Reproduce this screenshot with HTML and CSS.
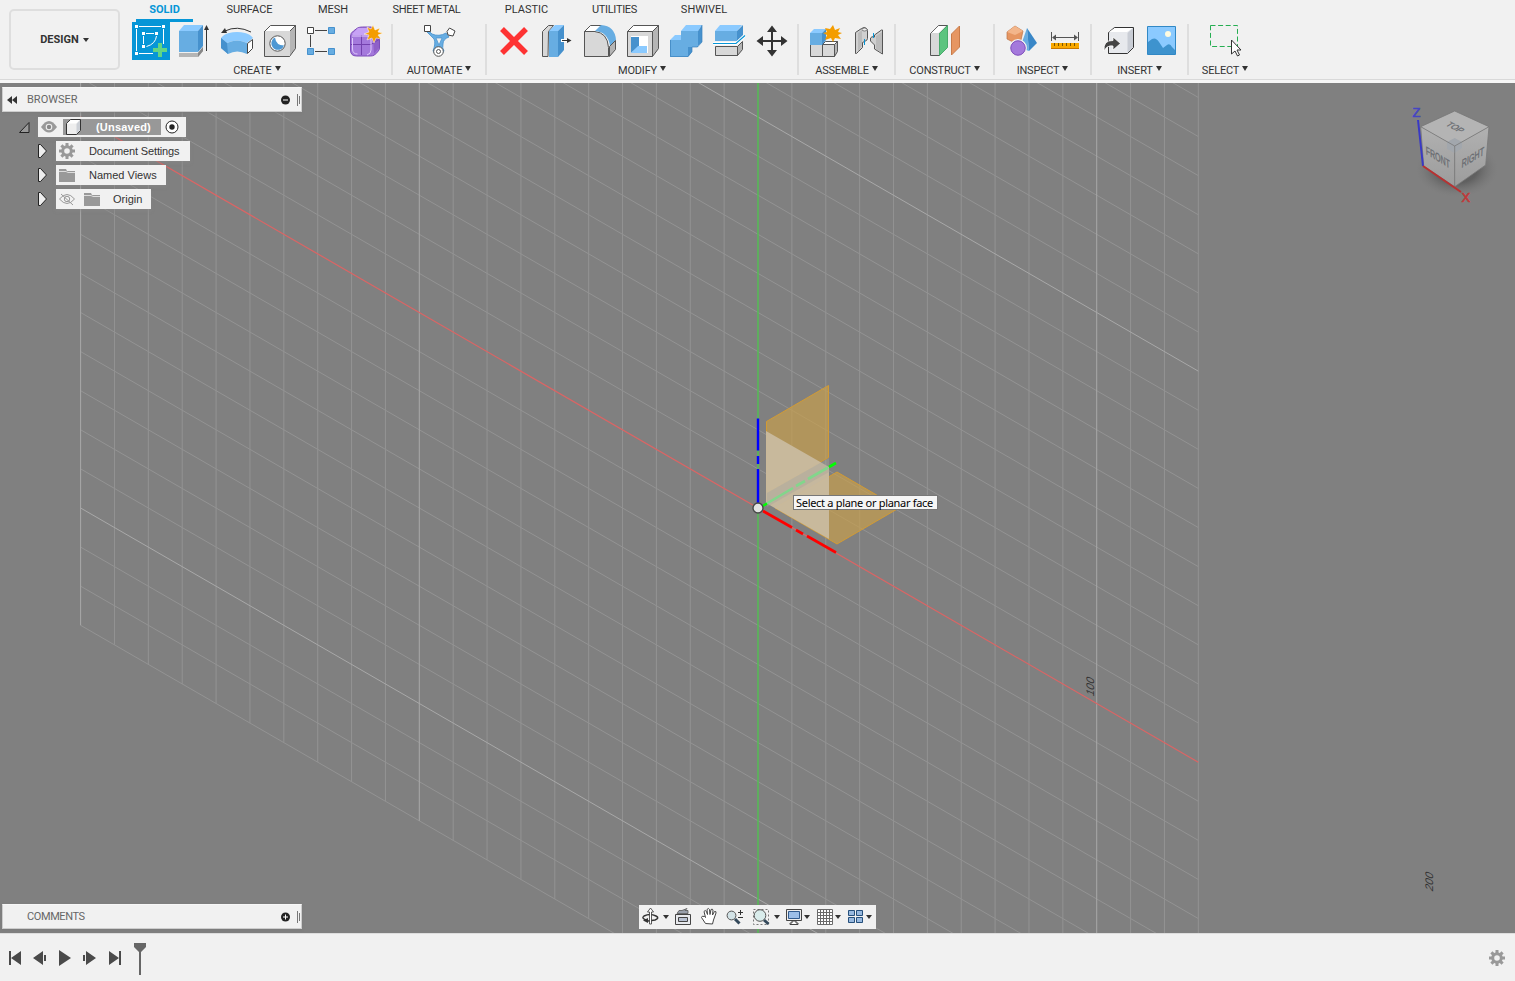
FILE: index.html
```html
<!DOCTYPE html>
<html lang="en">
<head>
<meta charset="utf-8">
<title>Design workspace</title>
<link rel="stylesheet" href="styles.css">
</head>
<body>
<div class="app">
<header class="toolbar">
  <button class="workspace">DESIGN<span class="caret"></span></button>
  <div class="ribbon">
    <nav class="tabs">
      <span class="tab active">SOLID</span><span class="tab">SURFACE</span><span class="tab">MESH</span><span class="tab sheet">SHEET METAL</span><span class="tab">PLASTIC</span><span class="tab utilities">UTILITIES</span><span class="tab">SHWIVEL</span>
    </nav>
    <div class="groups">
      <section class="group create">
        <div class="icons">
          <svg viewBox="128 20 43 42"><path fill="#0696d7" d="M132 22h38v38h-38z"/><g fill="none" stroke="#fff"><path d="M139 26.500h22M136.500 29v22M163.500 29v15M139 53.500h14M146 33.500h8M143.500 36v8M156.500 36q-1 8-10 10.500"/></g><path fill="#fff" d="M135 25h3v3h-3zM162 25h3v3h-3zM135 52h3v3h-3zM142 32h3v3h-3zM155 32h3v3h-3zM142 45h3v3h-3z"/><path fill="#61d585" d="M158 43h4v5h5v4h-5v5h-4v-5h-5v-4h5z"/></svg>
          <svg viewBox="171 20 43 42"><path fill="#b5b5b5" d="M179 53h19l5-6v4l-5 6h-19z"/><path fill="#888" d="M198 53l5-6v4l-5 6z"/><path fill="#67ade2" d="M179 31h19v21h-19z"/><path fill="#8bcaff" d="M179 31l5-6h19l-5 6z"/><path fill="#4691cd" d="M198 31l5-6v21l-5 6z"/><path stroke="#333" d="M206.500 51V29"/><path fill="#333" d="M204 30l2.500-5 2.500 5z"/></svg>
          <svg viewBox="214 20 43 42"><path fill="#8bcaff" d="M221 38q3-4 8-5 8-2 16 0 5 1 8 5l-6 5q-10-5-20 0z"/><path fill="#67ade2" d="M221 38l6 5q10-5 20 0v11q-10-5-19 0l-7-6z"/><path fill="#4691cd" d="M221 38l6 5 1 11-7-6z"/><path fill="#fff" stroke="#444" d="M247.500 43.500l5-4v9l-5 5z"/><path fill="none" stroke="#333" d="M225 31q12-6 26 1"/><path fill="#333" d="M221 33l4-5 2 5z"/></svg>
          <svg viewBox="257 20 43 42"><g stroke="#555"><path fill="#fff" d="M264.500 31.500l6-6h25l-6 6z"/><path fill="#b5b5b5" d="M289.500 31.500l6-6v23l-6 8z"/><path fill="#d8d8d8" stroke="none" d="M265 31h25v25h-25z"/><path fill="none" d="M264.500 31v25.500h25"/><circle cx="277.500" cy="43.500" r="7.700" fill="#fff"/></g><path fill="#4e98d3" d="M275 37.500a6.500 6.500 0 1 0 9 8q-8 0-9-8z"/></svg>
          <svg viewBox="300 20 43 42"><path stroke="#444" d="M315 30.500h12M310.500 35v12M315 51.500h12"/><path fill="#fff" stroke="#444" d="M307.500 27.500h6v6h-6z"/><path fill="#67ade2" stroke="#4691cd" d="M328.500 27.500h6v6h-6zM307.500 48.500h6v6h-6zM328.500 48.500h6v6h-6z"/></svg>
          <svg viewBox="343 20 43 42"><path fill="#a479dc" stroke="#7c4cb8" d="M350.500 36q0-3 3-5l4-3q2-1 5-1h9l8 11v10q0 2-2 4l-3 3q-2 1-4 1h-14q-6 0-6-6z"/><path fill="#c7a2f5" d="M352 34l6-6h10l5 3-5 4h-15z"/><path fill="none" stroke="#7442ae" d="M351 44.500h20l8-5M361.500 35v20"/><path fill="none" stroke="#dec8fb" d="M352 36h15q4 0 4 4v10q0 4-4 5M352.500 38v11q0 5 5 5"/><path fill="#7c4cb8" d="M373 38l6-2v12l-5 6z" fill-opacity=".55"/><path fill="#f49d00" stroke="#fff" stroke-width=".5" d="M373 25l2 5 5-2-2 4 5 1-5 2 3 4-5-1-2 5-2-5-5 2 2-5-5-1 5-2-2-5 4 2z"/></svg>
        </div>
        <div class="label">CREATE<span class="caret"></span></div>
      </section>
      <section class="group automate">
        <div class="icons">
          <svg viewBox="418 20 43 42"><path fill="#67ade2" stroke="#4691cd" stroke-width=".8" d="M429 31l3 3q7 3 14-1l3 4q-6 2-6 7-1 4 1 7a6 6 0 0 1-11 0q3-8 1-12l-7-7z"/><path fill="#f1f1f1" stroke="#4691cd" stroke-width=".7" d="M436 38h6l-3 7z"/><path fill="#fff" stroke="#444" d="M424.500 25.500h6v6h-6zM449.500 28l5.500 3-2 5-5-1-1-3.500z"/><circle cx="438.500" cy="51.500" r="4.800" fill="#fff" stroke="#555"/><circle cx="438.500" cy="51.500" r="2" fill="#fff" stroke="#555"/></svg>
        </div>
        <div class="label">AUTOMATE<span class="caret"></span></div>
      </section>
      <section class="group modify">
        <div class="icons">
          <svg viewBox="492 20 43 42"><path stroke="#fe3333" stroke-width="5.500" d="M502 29l24 24M526 29l-24 24"/></svg>
          <svg viewBox="535 20 43 42"><path fill="#d8d8d8" stroke="#555" d="M548 56.500h-5.500v-25l6-6h5l-5 6z"/><path fill="#67ade2" d="M549 31h9v26h-9z"/><path fill="#8bcaff" d="M549 31l6-6h9l-6 6z"/><path fill="#4691cd" d="M558 31l6-6v25l-6 7z"/><path stroke="#fff" stroke-width="3" d="M561 40.500h6"/><path stroke="#333" d="M562 40.500h6"/><path fill="#333" d="M567 38l4.500 2.500L567 43z"/></svg>
          <svg viewBox="578 20 43 42"><path fill="#d8d8d8" stroke="#555" d="M584.500 31.500h10q13 1 14 16v9h-24z"/><path fill="#fff" stroke="#555" d="M584.500 31.500l6-6h11l-6 6z"/><path fill="#67ade2" d="M595 31l6-6q14 1 15 15l-6 6q-2-14-15-15z"/><path fill="#b5b5b5" stroke="#555" d="M609.500 46.500l6-6v9l-6 7z"/></svg>
          <svg viewBox="621 20 43 42"><g stroke="#555"><path fill="#fff" d="M627.500 31.500l6-6h25l-6 6z"/><path fill="#b5b5b5" d="M652.500 31.500l6-6v23l-6 8z"/><path fill="#d8d8d8" d="M627.500 31.500h25v25h-25z"/></g><path fill="#fff" d="M631 36h17v17h-17z"/><path fill="#4691cd" d="M631 37h8v9l-8 7z"/><path fill="#8bcaff" d="M631 53l7-7h9v7z"/></svg>
          <svg viewBox="664 20 43 42"><path fill="#67ade2" d="M670 40h11v-9h17v16h-10v10h-18z"/><path fill="#8bcaff" d="M670 40l5-5h6v5zM681 31l5-6h16l-4 6z"/><path fill="#4691cd" d="M698 31l4-6v17l-5 5h-5v5l-4 5V47h10z"/><path fill="none" stroke="#3b83bd" stroke-width=".7" d="M670.500 40v16.500H688l4-5V47h5.500l4.500-5V25"/></svg>
          <svg viewBox="707 20 43 42"><path fill="#67ade2" d="M715 31h22v10h-22z"/><path fill="#8bcaff" d="M715 31l5-6h22l-5 6z"/><path fill="#4691cd" d="M737 31l6-6v10l-6 6z"/><path fill="#d8d8d8" stroke="#555" d="M715.500 46.500h22v9h-22z"/><path fill="#b5b5b5" stroke="#555" d="M737.500 46.500l5-5v8l-5 6z"/><path stroke="#fff" stroke-width="3" fill="none" d="M713 43.500h23l9-8"/><path stroke="#0696d7" stroke-width="1.200" fill="none" d="M713 43.500h23l9-8"/></svg>
          <svg viewBox="750 20 43 42"><path stroke="#333" stroke-width="2" d="M758 41h28M772 27v28"/><path fill="#333" d="M756.500 41l6.500-5v10zM787.500 41l-6.500-5v10zM772 25.500l-5 6.500h10zM772 56.500l-5-6.500h10z"/></svg>
        </div>
        <div class="label">MODIFY<span class="caret"></span></div>
      </section>
      <section class="group assemble">
        <div class="icons">
          <svg viewBox="804 20 43 42"><g stroke="#555"><path fill="#d8d8d8" d="M810.500 44.500h12v12h-12zM822.500 44.500h12v12h-12z"/><path fill="#fff" d="M822.500 44.500l3-3h12l-3 3z"/><path fill="#b5b5b5" d="M834.500 44.500l3-3v10l-3 5z"/></g><path fill="#67ade2" d="M810 33h12v12h-12z"/><path fill="#8bcaff" d="M810 33l4-4h12l-4 4z"/><path fill="#4691cd" d="M822 33l4-4v11l-4 5z"/><path fill="#f49d00" d="M833 25l2 5 5-2-2 4 4 1-4 2 3 4-6-1-2 4-2-4-6 2 2-5-4-2 4-1-2-4 5 1z"/></svg>
          <svg viewBox="847 20 43 42"><path fill="#d0d0d0" stroke="#555" d="M855.500 32.500l6-4q3-2 5 0 1 1 1 2v8q0 2-3 3l-2 1v5l-6 6h-1z"/><path fill="#bbb" d="M858 33l4-3v15l-4 7z"/><path fill="#d0d0d0" stroke="#555" d="M870.500 38q1-2 4-1v-2l7-5h1v24l-8-5v-4l-4-4z"/><path fill="#bbb" d="M876 36l6-4v21l-6-4z"/><ellipse cx="864.500" cy="29.500" rx="2.500" ry="1.500" fill="#eee" stroke="#555" stroke-width=".7"/><path stroke="#0696d7" d="M864.500 39v6M873.500 33v5"/></svg>
        </div>
        <div class="label">ASSEMBLE<span class="caret"></span></div>
      </section>
      <section class="group construct">
        <div class="icons">
          <svg viewBox="923 20 43 42"><path fill="#d8d8d8" stroke="#555" d="M930.500 33.500l8-8h9l-8 8v22h-9z"/><path fill="#fff" d="M931.500 33l7-7h7l-7 7z"/><path fill="#5bc47f" stroke="#49aa6b" d="M939.500 33.500l8-8v22l-8 8z"/><path fill="#e69662" stroke="#c97b49" d="M951.500 34l8-8v21l-8 8z"/></svg>
        </div>
        <div class="label">CONSTRUCT<span class="caret"></span></div>
      </section>
      <section class="group inspect">
        <div class="icons">
          <svg viewBox="1000 20 43 42"><path fill="#e69662" stroke="#bb7346" stroke-width=".7" d="M1007 32l8-6 8 5-2 9-8 2-6-3z"/><path fill="#f3b68b" d="M1007 32l8-6 8 5-8 4z"/><path fill="#67ade2" d="M1027 28l-7 20 9 3z"/><path fill="#3987c7" d="M1027 28l10 15-8 8z"/><circle cx="1018" cy="48" r="8.200" fill="#a479dc" stroke="#f1f1f1" stroke-width="1.500"/><circle cx="1018" cy="48" r="7.200" fill="none" stroke="#8353bd"/></svg>
          <svg viewBox="1043 20 43 42"><path stroke="#555" d="M1051.500 32v9M1078.500 32v9M1054 37.500h22"/><path fill="#555" d="M1052 37.500l4-3v6zM1078 37.500l-4-3v6z"/><path fill="#f9a800" d="M1051 43h28v6h-28z"/><path stroke="#c77700" d="M1051 48.500h28"/><path stroke="#795500" d="M1054.500 43v3M1058.500 43v3M1062.500 43v3M1066.500 43v3M1070.500 43v3M1074.500 43v3"/></svg>
        </div>
        <div class="label">INSPECT<span class="caret"></span></div>
      </section>
      <section class="group insert">
        <div class="icons">
          <svg viewBox="1097 20 43 42"><path fill="#e7e9ed" stroke="#333" d="M1108.500 32.500l6-5h19v20l-6 6h-19z"/><path fill="#fff" d="M1109 32l6-4h18l-6 4z"/><path fill="#c9cdd5" d="M1127.500 33l5.500-5v19l-5.500 6z"/><path fill="#444" stroke="#fff" stroke-width=".8" d="M1104 51q-1-11 9-10.500V37l7.500 6.500-7.500 6.500v-4q-6-1-9 5z"/></svg>
          <svg viewBox="1140 20 43 42"><path fill="#8bcaff" stroke="#3188c5" d="M1147.500 26.500h28v28h-28z"/><circle cx="1168" cy="34" r="3" fill="#fffbe0"/><path fill="#3e93ce" d="M1148 42l4-3q4-2 7 3l4 6 4-3q3-2 5 2l3 3v4h-27z"/></svg>
        </div>
        <div class="label">INSERT<span class="caret"></span></div>
      </section>
      <section class="group select">
        <div class="icons">
          <svg viewBox="1203 20 43 42"><path fill="none" stroke="#26ae52" stroke-dasharray="5 2.600" d="M1210.500 25.500h27v21h-27z"/><path fill="#fff" stroke="#333" d="M1231.500 40v14l3.500-3 2.500 5 2-1-2.500-5h4z"/></svg>
        </div>
        <div class="label">SELECT<span class="caret"></span></div>
      </section>
    </div>
  </div>
</header>

<main class="viewport">
  <svg class="scene" viewBox="0 83 1515 850">
    <defs>
      <radialGradient id="shadow"><stop offset=".5" stop-color="#555" stop-opacity=".75"/><stop offset="1" stop-color="#777" stop-opacity="0"/></radialGradient>
      <linearGradient id="side" x2="0" y2="1"><stop stop-color="#b1b1b1"/><stop offset="1" stop-color="#9c9c9c"/></linearGradient>
    </defs>
    <g class="grid" transform="matrix(33.870 19.550 0 39.100 758 508)">
      <path class="minor" d="M-19-31V13M-18-31V13M-17-31V13M-16-31V13M-15-31V13M-14-31V13M-13-31V13M-12-31V13M-11-31V13M-9-31V13M-8-31V13M-7-31V13M-6-31V13M-5-31V13M-4-31V13M-3-31V13M-2-31V13M-1-31V13M1-31V13M2-31V13M3-31V13M4-31V13M5-31V13M6-31V13M7-31V13M8-31V13M9-31V13M11-31V13M12-31V13M13-31V13"/>
      <path class="minor" d="M-20-18H13M-20-17H13M-20-16H13M-20-15H13M-20-14H13M-20-13H13M-20-12H13M-20-11H13M-20-9H13M-20-8H13M-20-7H13M-20-6H13M-20-5H13M-20-4H13M-20-3H13M-20-2H13M-20-1H13M-20 1H13M-20 2H13M-20 3H13M-20 4H13M-20 5H13M-20 6H13M-20 7H13M-20 8H13M-20 9H13M-20 11H13M-20 12H13M-20 13H13"/>
      <path class="major" d="M-20-31V13M-10-31V13M10-31V13M-20-10H13M-20 10H13"/>
      <path class="axis-x" d="M-20 0H13"/>
      <path class="axis-y" d="M0-31V13"/>
    </g>
    <text class="mark" transform="translate(1094 697) rotate(-90) skewX(-24)">100</text>
    <text class="mark" transform="translate(1432.500 892) rotate(-90) skewX(-24)">200</text>

    <g class="planes">
      <path class="plane" d="M766.500 421.500l62-36v72l-62 35zM775 508l62-36 62 36-62 36z"/>
      <path fill="#c9bb9f" fill-opacity=".95" d="M766 431l63 36v72l-63-36z"/>
      <path fill="#a6a69c" fill-opacity=".4" d="M767 493l62-35v14l-62 35z"/>
      <path stroke="#82d68b" stroke-width="2.600" d="M766 504l27-16M796 486l9-5M808 479l20-11.500"/>
      <path stroke="#0f0" stroke-width="2.600" d="M829 467l7-4M762 506.500l5-3"/>
      <path stroke="#00f" stroke-width="2.400" d="M758 418.500v32M758 456v8M758 469v34"/>
      <path stroke="red" stroke-width="2.600" d="M763 511l29 16.500M796 530l7 4M807 536l29 16.500"/>
      <circle cx="758" cy="508" r="5" fill="#e3e3e3" stroke="#484848" stroke-width="1.400"/>
    </g>

    <g class="cube">
      <ellipse cx="1457" cy="169" rx="41" ry="28" fill="url(#shadow)"/>
      <path fill="#b4b4b4" d="M1454.700 111l34.300 15.700-34.300 19.300-34-19.300z"/>
      <path fill="url(#side)" d="M1420.700 126.700l34 19.300v40.700l-31-20.700z"/>
      <path fill="url(#side)" d="M1489 126.700l-34.300 19.300v40.700l31-21.700z"/>
      <path fill="#a2a7ad" d="M1447 142l7.700-4 7.300 4v6l-7.300 5-7.700-4z"/>
      <path class="edge" d="M1454.700 111l34.300 15.700-34.300 19.300-34-19.300zM1420.700 126.700l3 39.300 31 20.700 31-21.700 3.300-38.300M1454.700 146v40.700"/>
      <path stroke="#3939c5" stroke-width="2" d="M1418 120l5 46"/>
      <path stroke="#b93131" stroke-width="2" d="M1423 166l38 26"/>
      <text class="face" transform="matrix(.74 .4 -.8 .5 1445 125)">TOP</text>
      <text class="face" transform="matrix(.7 .42 .05 1.150 1426 154)">FRONT</text>
      <text class="face" transform="matrix(.72 -.43 -.05 1.150 1461.500 168)">RIGHT</text>
      <text class="axis z" x="1412.500" y="116.500">Z</text>
      <text class="axis x" x="1461.500" y="201.500">X</text>
    </g>
  </svg>

  <div class="left-top">
    <div class="panel">
      <svg width="12" height="10" viewBox="0 0 12 10"><path fill="#333" d="M6 1v8L1 5zM11 1v8L6 5z"/></svg>
      <span class="title">BROWSER</span>
      <svg width="20" height="12" viewBox="0 0 20 12"><circle cx="4.500" cy="6" r="4.500" fill="#222"/><path stroke="#fff" d="M2 6h5"/><path stroke="#777" d="M16.500 0v12M18.500 2v8"/></svg>
    </div>
    <div class="tree">
      <div class="row root">
        <svg width="20" height="14" viewBox="0 0 20 14"><path fill="#999" stroke="#222" d="M2.500 12.500h9.500v-10z"/></svg>
        <div class="node">
          <svg class="eye" width="16" height="12" viewBox="0 0 16 12"><path fill="#999" d="M0 6q8-12 16 0-8 11-16 0z"/><circle cx="8" cy="6" r="3.300" fill="#eee"/><circle cx="8" cy="6" r="2.200" fill="#888"/></svg>
          <span class="chosen"><svg width="18" height="16" viewBox="0 0 18 16"><path fill="#eee" stroke="#333" d="M1.500 4.500l4-4h10v11l-4 4h-10z"/><path fill="#fff" d="M2 4.500l4-3.500h9l-4 3.500z"/><path fill="#ccd0d6" d="M11.500 5L15 1v10l-3.500 4z"/></svg>(Unsaved)</span>
          <svg width="14" height="14" viewBox="0 0 14 14"><circle cx="7" cy="7" r="6" fill="#fff" stroke="#222"/><circle cx="7" cy="7" r="2.700" fill="#222"/></svg>
        </div>
      </div>
      <div class="row">
        <svg width="19" height="14" viewBox="0 0 19 14"><path class="expander" d="M1.500.5h2l6 6.500-6 6.500h-2z"/></svg>
        <div class="node settings"><svg class="gear" width="16" height="16" viewBox="-8 -8 16 16"><circle r="4.300"/><path d="M0-8v4M0 4v4M-8 0h4M4 0h4M-5.600-5.600l3 3M2.600 2.600l3 3M-5.600 5.600l3-3M2.600-2.600l3-3"/></svg>Document Settings</div>
      </div>
      <div class="row">
        <svg width="19" height="14" viewBox="0 0 19 14"><path class="expander" d="M1.500.5h2l6 6.500-6 6.500h-2z"/></svg>
        <div class="node views"><svg width="16" height="14" viewBox="0 0 16 14"><path fill="#999" d="M0 1h7l1 2h8v11H0z"/><path stroke="#ddd" d="M0 3.500h7l2 1h7"/></svg>Named Views</div>
      </div>
      <div class="row">
        <svg width="19" height="14" viewBox="0 0 19 14"><path class="expander" d="M1.500.5h2l6 6.500-6 6.500h-2z"/></svg>
        <div class="node origin"><svg width="16" height="14" viewBox="0 0 16 14"><path fill="none" stroke="#999" d="M.5 7q7.500-9 15 0-7.500 9-15 0zM2 2l12 11"/><circle cx="8" cy="7" r="2.700" fill="none" stroke="#999"/></svg><svg width="16" height="14" viewBox="0 0 16 14"><path fill="#999" d="M0 1h7l1 2h8v11H0z"/><path stroke="#ddd" d="M0 3.500h7l2 1h7"/></svg>Origin</div>
      </div>
    </div>
  </div>

  <div class="panel comments">
    <span class="title">COMMENTS</span>
    <svg width="20" height="12" viewBox="0 0 20 12"><circle cx="4.500" cy="6" r="4.500" fill="#222"/><path stroke="#fff" d="M2 6h5M4.500 3.500v5"/><path stroke="#777" d="M16.500 0v12M18.500 2v8"/></svg>
  </div>

  <div class="tooltip">Select a plane or planar face</div>

  <div class="navbar">
    <svg width="34" height="24" viewBox="639 905 34 24"><path fill="none" stroke="#333" stroke-width="1.500" d="M646 920q-5-2-2-4 6-3 12 0 4 2-1 4l-7 1"/><path fill="#fff" stroke="#333" stroke-width=".8" d="M649.500 924v-12h-2l3-4 3 4h-2v12z"/><path fill="#333" d="M648 918v5l-5-2.500zM663 915h6l-3 4z"/></svg>
    <svg width="25" height="24" viewBox="673 905 25 24"><path fill="#e8eaee" stroke="#444" d="M675.500 914.500h15v10h-15z"/><path fill="#b9c2d2" stroke="#444" d="M678.500 917.500h9v4h-9z"/><path fill="#9aa1ad" stroke="#555" stroke-width=".8" d="M677 913.500l2-3h3l5-2-2 2h3v3z"/></svg>
    <svg width="25" height="24" viewBox="698 905 25 24"><path fill="#fff" stroke="#444" d="M705.500 923.500l-4-6q0-2 3-1l1 1-1.500-6q1-2 2.500 0l1 3-.5-5q1.500-2 2.500 0l.5 5 1-5q1.500-1 2 .5l-.5 5 2-3.500q2-.5 1.500 1.500l-2.500 7-1 4z"/></svg>
    <svg width="28" height="24" viewBox="723 905 28 24"><circle cx="731.500" cy="915.500" r="4.400" fill="#d3e3e7" stroke="#555"/><path stroke="#34495b" stroke-width="3" d="M735 919l4.500 4.500"/><path stroke="#333" d="M738 912.500h5M740.500 910v5M738 917.500h5"/></svg>
    <svg width="32" height="24" viewBox="751 905 32 24"><path fill="none" stroke="#777" stroke-dasharray="2 2" d="M753.500 909.500h15v15h-15z"/><circle cx="760" cy="915.500" r="5.800" fill="#d9eceb" stroke="#555"/><path stroke="#34495b" stroke-width="3" d="M764 920l4.500 4"/><path fill="#333" d="M774 915h6l-3 4z"/></svg>
    <svg width="31" height="24" viewBox="783 905 31 24"><path fill="#eee" stroke="#444" d="M786.500 909.500h15v11h-15z"/><path fill="#9dbfe8" stroke="#315b8e" d="M788.500 911.500h11v7h-11z"/><path fill="#fff" stroke="#444" d="M792 921h4v2h2v1.500h-8V923h2z"/><path fill="#333" d="M804 915h6l-3 4z"/></svg>
    <svg width="32" height="24" viewBox="814 905 32 24"><path fill="#fff" d="M817 909h16v16h-16z"/><path stroke="#6a6a6a" fill="none" d="M817.500 909.500h15v15h-15zM820.500 909v16M823.500 909v16M826.500 909v16M829.500 909v16M817 912.500h16M817 915.500h16M817 918.500h16M817 921.500h16"/><path fill="#333" d="M835 915h6l-3 4z"/></svg>
    <svg width="30" height="24" viewBox="846 905 30 24"><path fill="#98b9df" stroke="#254f7b" d="M848.500 910.500h6v5h-6zM856.500 910.500h6v5h-6zM848.500 917.500h6v5h-6zM856.500 917.500h6v5h-6z"/><path fill="#333" d="M866 915h6l-3 4z"/></svg>
  </div>
</main>

<footer class="timeline">
  <svg width="150" height="46" viewBox="0 935 150 46"><path fill="#4a4a4a" d="M9 951h2v14H9zM21 951v14l-10-7zM43 951v14l-10-7zM44 955h2v6h-2zM59 950l12 8-12 8zM83 955h2v6h-2zM86 951v14l10-7zM109 951v14l10-7zM119 951h2v14h-2z"/><path fill="#666" d="M134 943h12v4l-5 5v23h-2v-23l-5-5z"/></svg>
  <svg class="gear" width="16" height="16" viewBox="-8 -8 16 16"><circle r="4.300"/><path d="M0-8v4M0 4v4M-8 0h4M4 0h4M-5.600-5.600l3 3M2.600 2.600l3 3M-5.600 5.600l3-3M2.600-2.600l3-3"/></svg>
</footer>
</div>
</body>
</html>
```
FILE: styles.css
```css
* { box-sizing: border-box; }
body { margin: 0; font-family: "Liberation Sans", Arial, sans-serif; font-size: 11px; color: #333; }
svg { display: block; flex: none; }
.app { width: 1515px; height: 981px; display: grid; grid-template-rows: 83px 850px 48px; overflow: hidden; }

.toolbar { display: flex; background: #f1f1f1; font-family: Roboto, sans-serif; box-shadow: inset 0 -3px #f6f6f6, inset 0 -4px #d9d9d9; }
.workspace { width: 111px; height: 61px; margin: 9px 2px 0 9px; padding: 0; display: flex; align-items: center; justify-content: center; background: #f1f1f1; border: 2px solid #dedede; border-radius: 5px; font: bold 11px Roboto, sans-serif; color: #333; }
.caret { display: inline-block; border: 3.5px solid transparent; border-top: 5px solid #333; border-bottom: 0; margin-left: 3px; vertical-align: 3px; }
.workspace .caret { margin-left: 4px; border-top-width: 4px; }
.ribbon { display: flex; flex-direction: column; }
.tabs { display: grid; grid-template-columns: 77px 93px 74px 113px 87px 89px 90px; height: 20px; margin-left: 4px; text-align: center; line-height: 19px; white-space: nowrap; }
.tab { position: relative; }
.sheet, .utilities { letter-spacing: -.3px; }
.tab.active { color: #0696d7; font-weight: bold; }
.tab.active::after { content: ""; position: absolute; left: 10px; top: 19px; width: 57px; height: 3px; background: #0696d7; }
.groups { display: flex; }
.group { position: relative; height: 56px; }
.group:not(:last-child)::after { content: ""; position: absolute; right: -1px; top: 4px; width: 2px; height: 51px; background: #dedede; }
.icons { display: flex; height: 42px; padding-left: 6px; }
.icons svg { width: 43px; height: 42px; }
.label { text-align: center; line-height: 18px; white-space: nowrap; letter-spacing: -.2px; }
.create { width: 270px; }
.automate { width: 94px; }
.automate .icons { padding-left: 26px; }
.modify { width: 312px; }
.assemble { width: 97px; }
.construct { width: 99px; }
.construct .icons { padding-left: 28px; }
.inspect, .insert { width: 97px; }
.select { width: 74px; }
.select .icons { padding-left: 15px; }

.viewport { position: relative; background: #808080; overflow: hidden; }
.scene { width: 1515px; height: 850px; }
.grid path { fill: none; stroke-width: 1px; vector-effect: non-scaling-stroke; }
.grid .minor { stroke: #939393; }
.grid .major { stroke: #a8a8a8; }
.grid .axis-x { stroke: #dc6464; stroke-width: 1.2px; }
.grid .axis-y { stroke: #54bd54; stroke-width: 1.5px; }
.mark { font: 11px "Liberation Sans", sans-serif; fill: #333; }
.plane { fill: #c99f4b; fill-opacity: .68; stroke: #d29b34; }
.edge { fill: none; stroke: #777; stroke-width: .8px; }
.face { font: 10px "Liberation Sans", sans-serif; fill: #686b70; stroke: #686b70; stroke-width: .3px; }
.axis { font: 13px "Liberation Sans", sans-serif; stroke-width: .6px; }
.z { fill: #4545c3; stroke: #4545c3; }
.x { fill: #c03838; stroke: #c03838; }

.left-top { position: absolute; left: 2px; top: 4px; width: 300px; }
.panel { width: 300px; height: 25px; padding: 0 0 0 3px; display: flex; align-items: center; background: #f1f1f1; border: 1px solid #cdcdcd; border-top-color: #f7f7f7; box-shadow: 0 1px 2px #7779; font-family: Roboto, sans-serif; color: #666; }
.panel .title { margin: 0 auto 0 9px; }
.comments { position: absolute; left: 2px; bottom: 4px; padding-left: 24px; }
.comments .title { margin-left: 0; letter-spacing: -.4px; }
.tree { display: flex; flex-direction: column; gap: 4px; padding: 5px 0 0 35px; }
.row { display: flex; align-items: center; height: 20px; }
.root { margin-left: -20px; }
.node { height: 20px; display: flex; align-items: center; padding-left: 3px; background: #f1f1f1; box-shadow: 0 2px 3px #8888; white-space: nowrap; }
.root .node { width: 148px; margin-left: 1px; gap: 4px; }
.root .eye { margin-right: 2px; }
.chosen { width: 98px; height: 16px; display: flex; align-items: center; gap: 13px; padding-left: 2px; background: #989898; color: #fff; font-weight: bold; letter-spacing: .2px; }
.expander { fill: #eee; stroke: #222; }
.settings { width: 134px; gap: 14px; letter-spacing: -.15px; }
.views { width: 110px; gap: 14px; }
.origin { width: 95px; gap: 9px; }
.origin svg + svg { margin-right: 4px; }
.gear circle { fill: none; stroke: #999; stroke-width: 3px; }
.gear path { stroke: #999; stroke-width: 3px; }
.tooltip { position: absolute; left: 793px; top: 412px; width: 145px; height: 15px; border: 1px solid #777; background: #f5f5f5; color: #000; font: 11px/13px "Noto Sans", sans-serif; letter-spacing: -.3px; padding-left: 2px; white-space: nowrap; }
.navbar { position: absolute; left: 639px; bottom: 4px; display: flex; background: #f1f1f1; }

.timeline { display: flex; align-items: center; justify-content: space-between; padding: 1px 10px 0 0; background: #f1f1f1; border-top: 1px solid #ddd; }
```
